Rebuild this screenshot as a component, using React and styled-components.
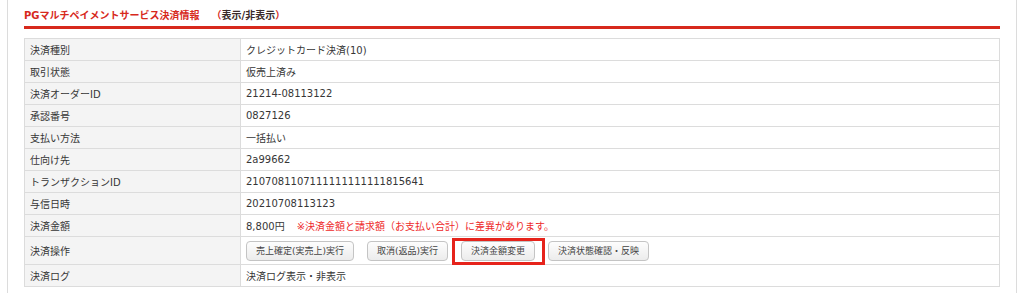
import styled, { createGlobalStyle } from 'styled-components';

const GlobalStyle = createGlobalStyle`
  html, body {
    margin: 0;
    background: #ffffff;
  }
  body {
    font-family: "DejaVu Sans", "Noto Sans CJK JP", sans-serif;
    font-size: 10px;
    color: #363636;
  }
`;

const Frame = styled.div`
  margin: 0 7px;
  min-height: 293px;
  border-left: 1px solid #dcdcdc;
  border-right: 1px solid #dcdcdc;
  padding: 0 16px;
  box-sizing: border-box;
`;

const Heading = styled.h2`
  margin: 0 0 9px;
  padding-top: 6px;
  height: 20px;
  line-height: 20px;
  font-size: 10px;
  font-weight: bold;
  color: #d7291c;
  border-bottom: 3px solid #d7291c;
`;

const ToggleGroup = styled.span`
  margin-left: 12px;
`;

const Toggle = styled.a`
  color: #3a2a2a;
  text-decoration: none;
  cursor: pointer;
`;

const Table = styled.table`
  width: 100%;
  border-collapse: collapse;
  border: 1px solid #dcdcdc;
`;

const Row = styled.tr`
  height: ${(p) => (p.$tall ? '28px' : '22px')};
`;

const Label = styled.th`
  width: 205px;
  padding: 0 5px;
  text-align: left;
  font-weight: normal;
  background: #f4f4f4;
  border: 1px solid #dcdcdc;
`;

const Value = styled.td`
  padding: 0 5px;
  background: #ffffff;
  border: 1px solid #dcdcdc;
`;

const Notice = styled.span`
  margin-left: 12px;
  color: #ee2a2a;
`;

const Actions = styled.div`
  display: flex;
  align-items: center;
  gap: 13px;
`;

const Button = styled.button`
  position: relative;
  height: 20px;
  padding: 0 9px;
  font-family: inherit;
  font-size: 9px;
  color: #444;
  background: linear-gradient(#fdfdfd, #ececec);
  border: 1px solid #c4c4c4;
  border-radius: 4px;
  cursor: pointer;

  ${(p) =>
    p.$marked &&
    `
    &::after {
      content: "";
      position: absolute;
      top: -4px;
      bottom: -5px;
      left: -10px;
      right: -11px;
      border: 3px solid #e6231b;
      pointer-events: none;
    }
  `}
`;

const rows = [
  ['決済種別', 'クレジットカード決済(10)'],
  ['取引状態', '仮売上済み'],
  ['決済オーダーID', '21214-08113122'],
  ['承認番号', '0827126'],
  ['支払い方法', '一括払い'],
  ['仕向け先', '2a99662'],
  ['トランザクションID', '2107081107111111111111815641'],
  ['与信日時', '20210708113123'],
];

const actions = [
  { label: '売上確定(実売上)実行' },
  { label: '取消(返品)実行' },
  { label: '決済金額変更', marked: true },
  { label: '決済状態確認・反映' },
];

export default function App() {
  return (
    <>
      <GlobalStyle />
      <Frame>
        <Heading>
          PGマルチペイメントサービス決済情報
          <ToggleGroup>
            （<Toggle>表示/非表示</Toggle>）
          </ToggleGroup>
        </Heading>
        <Table>
          <tbody>
            {rows.map(([label, value]) => (
              <Row key={label}>
                <Label>{label}</Label>
                <Value>{value}</Value>
              </Row>
            ))}
            <Row>
              <Label>決済金額</Label>
              <Value>
                8,800円
                <Notice>※決済金額と請求額（お支払い合計）に差異があります。</Notice>
              </Value>
            </Row>
            <Row $tall>
              <Label>決済操作</Label>
              <Value>
                <Actions>
                  {actions.map((a) => (
                    <Button key={a.label} type="button" $marked={a.marked}>
                      {a.label}
                    </Button>
                  ))}
                </Actions>
              </Value>
            </Row>
            <Row>
              <Label>決済ログ</Label>
              <Value>決済ログ表示・非表示</Value>
            </Row>
          </tbody>
        </Table>
      </Frame>
    </>
  );
}
